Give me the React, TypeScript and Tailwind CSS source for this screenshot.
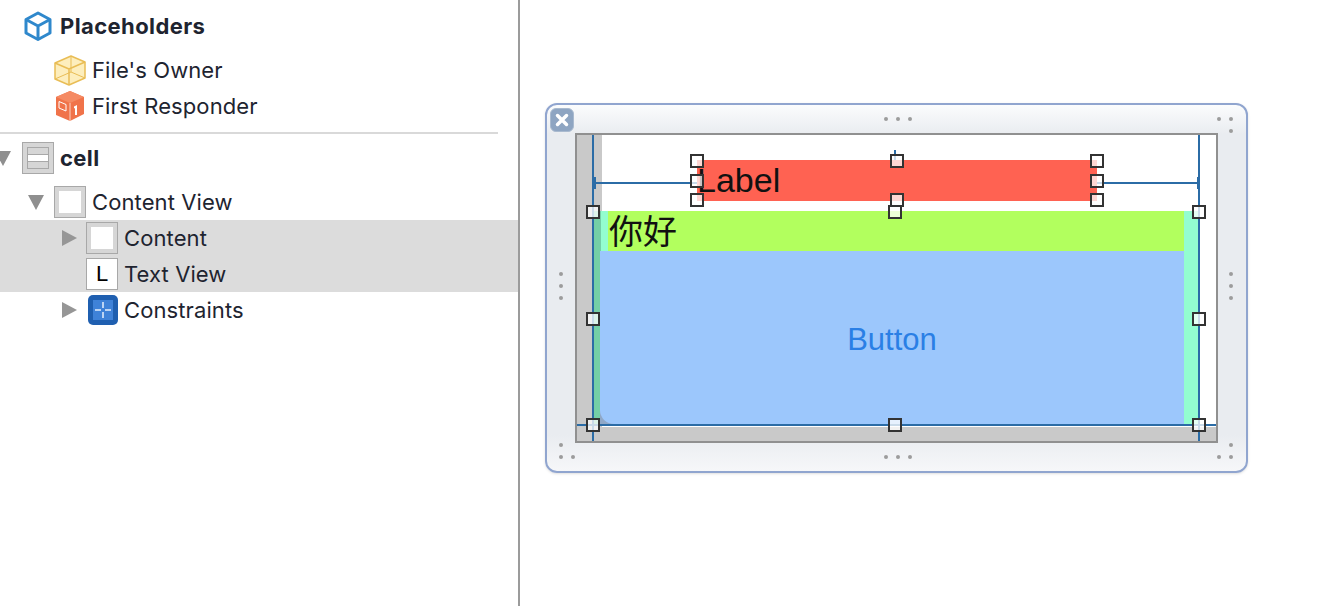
const handles = [
  'left-[143px] top-[49px]',
  'left-[143px] top-[69px]',
  'left-[143px] top-[88px]',
  'left-[543px] top-[49px]',
  'left-[543px] top-[69px]',
  'left-[543px] top-[88px]',
  'left-[343px] top-[49px]',
  'left-[343px] top-[88px]',
  'left-[341px] top-[100px]',
  'left-[39px] top-[100px]',
  'left-[645px] top-[100px]',
  'left-[39px] top-[207px]',
  'left-[645px] top-[207px]',
  'left-[39px] top-[313px]',
  'left-[341px] top-[313px]',
  'left-[645px] top-[313px]',
];

const dots = [
  'left-[337px] top-[12px]', 'left-[349px] top-[12px]', 'left-[361px] top-[12px]',
  'left-[670px] top-[12px]', 'left-[682px] top-[12px]', 'left-[682px] top-[24px]',
  'left-[12px] top-[167px]', 'left-[12px] top-[179px]', 'left-[12px] top-[191px]',
  'left-[682px] top-[167px]', 'left-[682px] top-[179px]', 'left-[682px] top-[191px]',
  'left-[12px] top-[338px]', 'left-[12px] top-[350px]', 'left-[24px] top-[350px]',
  'left-[337px] top-[350px]', 'left-[349px] top-[350px]', 'left-[361px] top-[350px]',
  'left-[682px] top-[338px]', 'left-[670px] top-[350px]', 'left-[682px] top-[350px]',
];

function Arrow({ down }: { down?: boolean }) {
  return (
    <svg width="18" height="18" viewBox="0 0 18 18" className="shrink-0">
      {down ? <path d="M1 2h16l-8 15z" fill="#8f8f8f" /> : <path d="M2 1l15 8-15 8z" fill="#969696" />}
    </svg>
  );
}

function ViewIcon({ children, plain }: { children?: React.ReactNode; plain?: boolean }) {
  return (
    <div
      className={`w-8 h-8 shrink-0 border border-[#a8a8a8] flex items-center justify-center ${
        plain ? 'bg-white' : 'bg-[#d6d6d6]'
      }`}
    >
      {children ?? <div className="w-[22px] h-[22px] bg-white" />}
    </div>
  );
}

function Label({ children, bold }: { children: React.ReactNode; bold?: boolean }) {
  return (
    <span
      className={`text-[22px] text-[#1e2430] whitespace-nowrap ${
        bold ? 'font-bold tracking-[0.4px]' : 'tracking-[0.1px]'
      }`}
    >
      {children}
    </span>
  );
}

function Outline() {
  return (
    <div className="w-[518px] shrink-0 h-full pt-2">
      <div className="h-9 pl-6 flex items-center gap-2">
        <svg width="28" height="30" viewBox="0 0 28 30" fill="none" stroke="#2f88cc" strokeWidth="3" strokeLinejoin="round">
          <path d="M14 2L26 8.5V22L14 28.5L2 22V8.5Z" />
          <path d="M2 8.5L14 15L26 8.5M14 15V28.5" />
        </svg>
        <Label bold>Placeholders</Label>
      </div>
      <div className="h-9 mt-2 pl-[54px] flex items-center gap-[6px]">
        <svg width="32" height="32" viewBox="0 0 32 32" fill="#fdeebd" stroke="#e9bd55" strokeWidth="1.5" strokeLinejoin="round">
          <path d="M1 9L17 2L31 8V24L15 31L1 25Z" />
          <path d="M1 9L15 15L31 8M15 15V31" fill="none" />
          <path d="M1 25L17 18L31 24M17 2V18" fill="none" strokeWidth="1" />
        </svg>
        <Label>File's Owner</Label>
      </div>
      <div className="h-9 pl-[56px] flex items-center gap-2">
        <svg width="28" height="30" viewBox="0 0 28 30">
          <path d="M14 0L28 6V23L14 30L0 24V6Z" fill="#f0734a" />
          <path d="M0 6L14 12L28 6L14 0Z" fill="#f58a63" />
          <path d="M14 12V30" stroke="#fbd3c2" strokeWidth="1" />
          <path d="M3 10.5L10 13.5V20L3 17Z" fill="none" stroke="#fff" strokeWidth="1" />
          <path d="M18 15.5l3-1.5v10h-2v-7l-1 .5z" fill="#fff" />
        </svg>
        <Label>First Responder</Label>
      </div>
      <div className="h-0.5 w-[498px] mt-2 bg-[#d9d9d9]" />
      <div className="h-9 mt-1.5 flex items-center">
        <div className="-ml-[6px] mr-[10px]">
          <Arrow down />
        </div>
        <ViewIcon>
          <div className="w-[22px] h-[22px] flex flex-col gap-px bg-[#a8a8a8] border border-[#a8a8a8]">
            <div className="flex-1 bg-[#d6d6d6]" />
            <div className="flex-1 bg-white" />
            <div className="flex-1 bg-[#d6d6d6]" />
          </div>
        </ViewIcon>
        <span className="ml-[6px]">
          <Label bold>cell</Label>
        </span>
      </div>
      <div className="h-9 mt-2 pl-[27px] flex items-center">
        <Arrow down />
        <span className="ml-[9px] mr-[6px]">
          <ViewIcon />
        </span>
        <Label>Content View</Label>
      </div>
      <div className="bg-[#dcdcdc]">
        <div className="h-9 pl-[60px] flex items-center">
          <Arrow />
          <span className="ml-2 mr-[6px]">
            <ViewIcon />
          </span>
          <Label>Content</Label>
        </div>
        <div className="h-9 pl-[86px] flex items-center gap-[6px]">
          <ViewIcon plain>
            <span className="text-[22px] leading-none text-black font-['Liberation_Sans',sans-serif]">L</span>
          </ViewIcon>
          <Label>Text View</Label>
        </div>
      </div>
      <div className="h-9 pl-[60px] flex items-center">
        <Arrow />
        <svg width="30" height="30" viewBox="0 0 30 30" className="ml-[10px] mr-[6px] shrink-0">
          <rect x="0" y="0" width="30" height="30" rx="5" fill="#1f5fb0" />
          <rect x="5" y="5" width="20" height="20" fill="#3f82d8" />
          <path d="M15 7v6M15 17v6M7 15h6M17 15h6" stroke="#e6f0fc" strokeWidth="1.5" />
        </svg>
        <Label>Constraints</Label>
      </div>
    </div>
  );
}

function CellWindow() {
  return (
    <div className="absolute left-[25px] top-[103px] w-[703px] h-[370px] rounded-[12px] border-2 border-[#90a5cf] shadow-sm bg-[linear-gradient(#fbfcfd,#e9ecf0_8%,#e9ecf0_90%,#f6f7f9)]">
      <div className="absolute left-[3px] top-[3px] w-6 h-6 rounded-md bg-[#8ea5c2] border border-[#a9bacf] flex items-center justify-center">
        <svg width="14" height="14" viewBox="0 0 14 14" stroke="#fff" strokeWidth="3.5" strokeLinecap="round">
          <path d="M2.5 2.5l9 9M11.5 2.5l-9 9" />
        </svg>
      </div>
      {dots.map((d) => (
        <div key={d} className={`absolute w-1 h-1 rounded-full bg-[#9c9c9c] blur-[0.5px] ${d}`} />
      ))}

      {/* the cell itself */}
      <div className="absolute left-[28px] top-[28px] w-[643px] h-[310px] border-2 border-[#909090] bg-white overflow-hidden">
        <div className="absolute left-0 top-0 w-[25px] h-full bg-[#c9c9c9]" />
        <div className="absolute left-0 top-[292px] w-full h-[14px] bg-[#c9c9c9]" />

        <div className="absolute left-[120px] top-[25px] w-[400px] h-[41px] bg-[#ff6252]" />
        <span className="absolute left-[120px] top-[25px] h-[41px] leading-[41px] text-[34px] text-[#111] font-['Liberation_Sans',sans-serif]">
          Label
        </span>

        <div className="absolute left-[17px] top-[76px] w-[7px] h-[213px] bg-[#74cfa6]" />
        <div className="absolute left-[24px] top-[76px] w-[7px] h-[40px] bg-[#93fdd0]" />
        <div className="absolute left-[607px] top-[76px] w-[15px] h-[213px] bg-[#93fdd0]" />
        <div className="absolute left-[31px] top-[76px] w-[576px] h-[40px] pl-px bg-[#b2ff5e] flex items-center">
          <span className="text-[34px] leading-[38px] pb-[2px] text-[#111] font-['Noto_Sans_CJK_SC',sans-serif]">你好</span>
        </div>
        <div className="absolute left-[23px] top-[116px] w-[584px] h-[173px] bg-[#8fa8c8]">
          <div className="w-full h-full bg-[#9cc7fc] rounded-bl-[14px] flex items-center justify-center pt-[6px]">
            <span className="text-[31px] text-[#2a7fe5] font-['Liberation_Sans',sans-serif]">Button</span>
          </div>
        </div>

        {/* constraint lines */}
        <div className="absolute left-[15px] top-0 w-0.5 h-full bg-[#2b6ca6]" />
        <div className="absolute left-[621px] top-0 w-0.5 h-full bg-[#2b6ca6]" />
        <div className="absolute left-0 top-[289px] w-full h-0.5 bg-[#2b6ca6]" />
        <div className="absolute left-[17px] top-[47px] w-[103px] h-0.5 bg-[#2b6ca6]" />
        <div className="absolute left-[520px] top-[47px] w-[102px] h-0.5 bg-[#2b6ca6]" />
        <div className="absolute left-[17px] top-[42px] w-0.5 h-3 bg-[#2b6ca6]" />
        <div className="absolute left-[620px] top-[42px] w-0.5 h-3 bg-[#2b6ca6]" />
        <div className="absolute left-[317px] top-[15px] w-0.5 h-[10px] bg-[#2b6ca6]" />
      </div>

      {handles.map((h) => (
        <div
          key={h}
          className={`absolute w-[14px] h-[14px] border-2 border-[#333] bg-white/75 ${h}`}
        />
      ))}
    </div>
  );
}

export default function App() {
  return (
    <div className="w-[1344px] h-[606px] bg-white flex overflow-hidden font-['Inter','Liberation_Sans',sans-serif]">
      <Outline />
      <div className="w-0.5 shrink-0 bg-[#9b9b9b]" />
      <div className="flex-1 relative">
        <CellWindow />
      </div>
    </div>
  );
}
